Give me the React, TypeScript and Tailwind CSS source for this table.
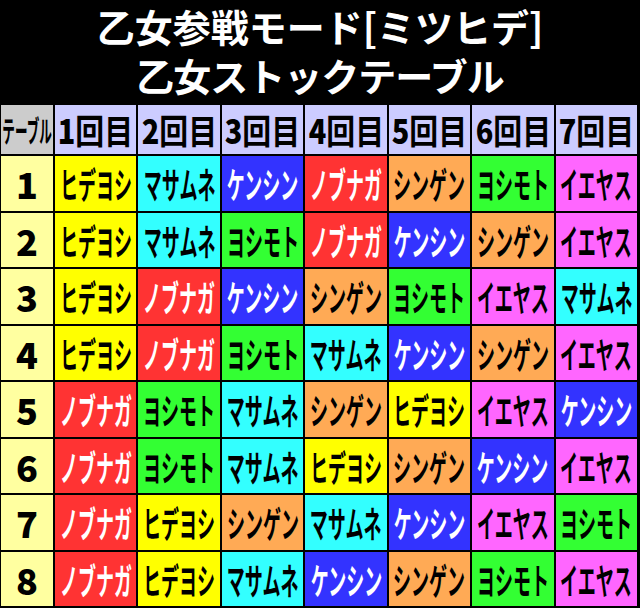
import React from "react";

type Name =
  | "ヒデヨシ"
  | "マサムネ"
  | "ケンシン"
  | "ノブナガ"
  | "シンゲン"
  | "ヨシモト"
  | "イエヤス";

// 武将ごとのセル色
const colors: Record<Name, string> = {
  ヒデヨシ: "bg-[#ffff00] text-black",
  マサムネ: "bg-[#33ffff] text-black",
  ケンシン: "bg-[#3333ff] text-white",
  ノブナガ: "bg-[#ff3333] text-white",
  シンゲン: "bg-[#ffaa55] text-black",
  ヨシモト: "bg-[#33ff33] text-black",
  イエヤス: "bg-[#ff66ff] text-black",
};

const tables: Name[][] = [
  ["ヒデヨシ", "マサムネ", "ケンシン", "ノブナガ", "シンゲン", "ヨシモト", "イエヤス"],
  ["ヒデヨシ", "マサムネ", "ヨシモト", "ノブナガ", "ケンシン", "シンゲン", "イエヤス"],
  ["ヒデヨシ", "ノブナガ", "ケンシン", "シンゲン", "ヨシモト", "イエヤス", "マサムネ"],
  ["ヒデヨシ", "ノブナガ", "ヨシモト", "マサムネ", "ケンシン", "シンゲン", "イエヤス"],
  ["ノブナガ", "ヨシモト", "マサムネ", "シンゲン", "ヒデヨシ", "イエヤス", "ケンシン"],
  ["ノブナガ", "ヨシモト", "マサムネ", "ヒデヨシ", "シンゲン", "ケンシン", "イエヤス"],
  ["ノブナガ", "ヒデヨシ", "シンゲン", "マサムネ", "ケンシン", "イエヤス", "ヨシモト"],
  ["ノブナガ", "ヒデヨシ", "マサムネ", "ケンシン", "シンゲン", "ヨシモト", "イエヤス"],
];

const font = { fontFamily: '"Noto Sans CJK JP", "Noto Sans", sans-serif' };

export default function App() {
  return (
    <div
      className="w-[640px] h-[608px] bg-black flex flex-col overflow-hidden"
      style={font}
    >
      {/* タイトル */}
      <div className="h-[103px] flex flex-col items-center justify-center gap-[3px] text-white font-bold text-[38px] leading-[46px] pb-[2px]">
        <div>乙女参戦モード[ミツヒデ]</div>
        <div className="tracking-[-1px]">乙女ストックテーブル</div>
      </div>

      {/* テーブル */}
      <div className="flex-1 grid grid-cols-[52px_repeat(7,minmax(0,1fr))] grid-rows-[49px_repeat(8,minmax(0,1fr))] gap-[2px] pl-[1px] pr-[3px] pt-[2px] pb-[2px]">
        <div className="bg-[#cccccc] flex items-center justify-center overflow-hidden">
          <span className="inline-block scale-x-[0.42] text-[30px] font-bold text-black whitespace-nowrap">
            テーブル
          </span>
        </div>
        {[1, 2, 3, 4, 5, 6, 7].map((n) => (
          <div
            key={n}
            className="bg-[#ccccff] flex items-center justify-center overflow-hidden"
          >
            <span className="inline-block scale-x-[0.85] text-[34px] font-bold text-black whitespace-nowrap leading-none">
              <span className="font-black">{n}</span>回目
            </span>
          </div>
        ))}

        {tables.map((row, i) => (
          <React.Fragment key={i}>
            <div className="bg-[#ffffa0] flex items-center justify-center text-[36px] font-black text-black leading-none">
              {i + 1}
            </div>
            {row.map((name, j) => (
              <div
                key={j}
                className={`${colors[name]} flex items-center justify-center overflow-hidden`}
              >
                <span className="inline-block scale-x-50 text-[36px] font-bold whitespace-nowrap leading-none">
                  {name}
                </span>
              </div>
            ))}
          </React.Fragment>
        ))}
      </div>
    </div>
  );
}
